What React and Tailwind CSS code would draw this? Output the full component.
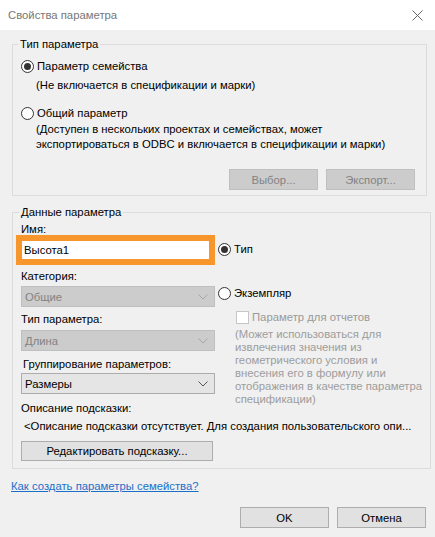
import React from 'react';

const Radio = ({ checked }) => (
  <span className="w-[13px] h-[13px] rounded-full border border-[#333333] bg-white flex items-center justify-center shrink-0">
    {checked && <span className="w-[7px] h-[7px] rounded-full bg-[#333333]" />}
  </span>
);

const Chevron = ({ color }) => (
  <svg width="10" height="6" viewBox="0 0 10 6" fill="none">
    <polyline points="0.5,0.5 5,5 9.5,0.5" stroke={color} strokeWidth="1" />
  </svg>
);

const Select = ({ value, disabled }) => (
  <div
    className={
      disabled
        ? 'ml-[5px] w-[194px] h-[21px] flex items-center justify-between pl-[3px] pr-[6px] bg-[#cccccc] border border-[#bfbfbf] text-[#838383]'
        : 'ml-[5px] w-[194px] h-[21px] flex items-center justify-between pl-[3px] pr-[6px] bg-[#e5e5e5] border border-[#acacac] text-black'
    }
  >
    <span>{value}</span>
    <Chevron color={disabled ? '#a6a6a6' : '#555555'} />
  </div>
);

const Button = ({ children, disabled }) => (
  <button
    type="button"
    className={
      disabled
        ? 'w-[89px] h-[21px] bg-[#cccccc] border border-[#bfbfbf] text-[#838383] flex items-center justify-center'
        : 'w-[89px] h-[21px] bg-[#e1e1e1] border border-[#adadad] text-black flex items-center justify-center'
    }
  >
    {children}
  </button>
);

export default function App() {
  return (
    <div className="w-[435px] h-[537px] bg-[#f0f0f0] flex flex-col text-[11.3px] leading-[14px] text-black font-['Liberation_Sans',Arial,sans-serif] overflow-hidden">
      {/* title bar */}
      <div className="h-[30px] bg-white flex items-center justify-between pl-[8px] pr-[12px] shrink-0">
        <span className="text-[#777777]">Свойства параметра</span>
        <svg width="11" height="11" viewBox="0 0 11 11">
          <path d="M0.5 0.5 L10.5 10.5 M10.5 0.5 L0.5 10.5" stroke="#666666" strokeWidth="1" />
        </svg>
      </div>

      <div className="pl-[12px] pr-[8px] pt-[7px] flex flex-col">
        {/* Тип параметра */}
        <fieldset className="border border-[#dcdcdc] pl-[8px] pr-[11px] pb-[5px]">
          <legend className="-ml-[3px] px-[2px]">Тип параметра</legend>
          <div className="mt-[7px] h-[16px] flex items-center gap-[3px]">
            <Radio checked />
            <span>Параметр семейства</span>
          </div>
          <div className="mt-[3px] ml-[15px] leading-[16px]">(Не включается в спецификации и марки)</div>
          <div className="mt-[12px] h-[16px] flex items-center gap-[3px]">
            <Radio />
            <span>Общий параметр</span>
          </div>
          <div className="mt-[1px] ml-[15px] leading-[15px] whitespace-nowrap">
            (Доступен в нескольких проектах и семействах, может
            <br />
            экспортироваться в ODBC и включается в спецификации и марки)
          </div>
          <div className="mt-[17px] flex justify-end gap-[8px]">
            <Button disabled>Выбор...</Button>
            <Button disabled>Экспорт...</Button>
          </div>
        </fieldset>

        {/* Данные параметра */}
        <fieldset className="mt-[9px] border border-[#dcdcdc] pl-[3px] pr-[8px] pb-[7px]">
          <legend className="ml-[3px] px-[2px]">Данные параметра</legend>
          <div className="mt-[4px] flex gap-[3px]">
            <div className="w-[199px] flex flex-col">
              <div className="mt-[1px] ml-[5px] leading-[11px]">Имя:</div>
              <div className="border-[6px] border-[#f7962c] bg-white h-[30px] flex items-center pl-[2px]">
                Высота1
              </div>
              <div className="mt-[4px] ml-[5px]">Категория:</div>
              <div className="mt-[3px]">
                <Select value="Общие" disabled />
              </div>
              <div className="mt-[5px] ml-[5px]">Тип параметра:</div>
              <div className="mt-[4px]">
                <Select value="Длина" disabled />
              </div>
              <div className="mt-[6px] ml-[7px]">Группирование параметров:</div>
              <div className="mt-[2px]">
                <Select value="Размеры" />
              </div>
              <div className="mt-[7px] ml-[5px]">Описание подсказки:</div>
            </div>
            <div className="flex flex-col">
              <div className="mt-[18px] h-[16px] flex items-center gap-[3px]">
                <Radio checked />
                <span>Тип</span>
              </div>
              <div className="mt-[28px] h-[16px] flex items-center gap-[3px]">
                <Radio />
                <span>Экземпляр</span>
              </div>
              <div className="mt-[8px] ml-[18px] h-[16px] flex items-center gap-[3px] text-[#9a9a9a]">
                <span className="w-[13px] h-[13px] bg-white border border-[#c6c6c6] shrink-0" />
                <span>Параметр для отчетов</span>
              </div>
              <div className="mt-[3px] ml-[17px] leading-[13px] text-[#9d9d9d] whitespace-nowrap">
                (Может использоваться для
                <br />
                извлечения значения из
                <br />
                геометрического условия и
                <br />
                внесения его в формулу или
                <br />
                отображения в качестве параметра
                <br />
                спецификации)
              </div>
            </div>
          </div>
          <div className="mt-[4px] ml-[8px] whitespace-nowrap">
            &lt;Описание подсказки отсутствует. Для создания пользовательского опи...
          </div>
          <button
            type="button"
            className="mt-[8px] ml-[5px] w-[192px] h-[20px] bg-[#e1e1e1] border border-[#adadad] flex items-center justify-center"
          >
            Редактировать подсказку...
          </button>
        </fieldset>

        <a href="#" className="mt-[10px] -ml-[1px] text-[#1a6fc9] underline self-start">
          Как создать параметры семейства?
        </a>

        <div className="mt-[14px] mr-[1px] flex justify-end gap-[8px]">
          <Button>OK</Button>
          <Button>Отмена</Button>
        </div>
      </div>
    </div>
  );
}
